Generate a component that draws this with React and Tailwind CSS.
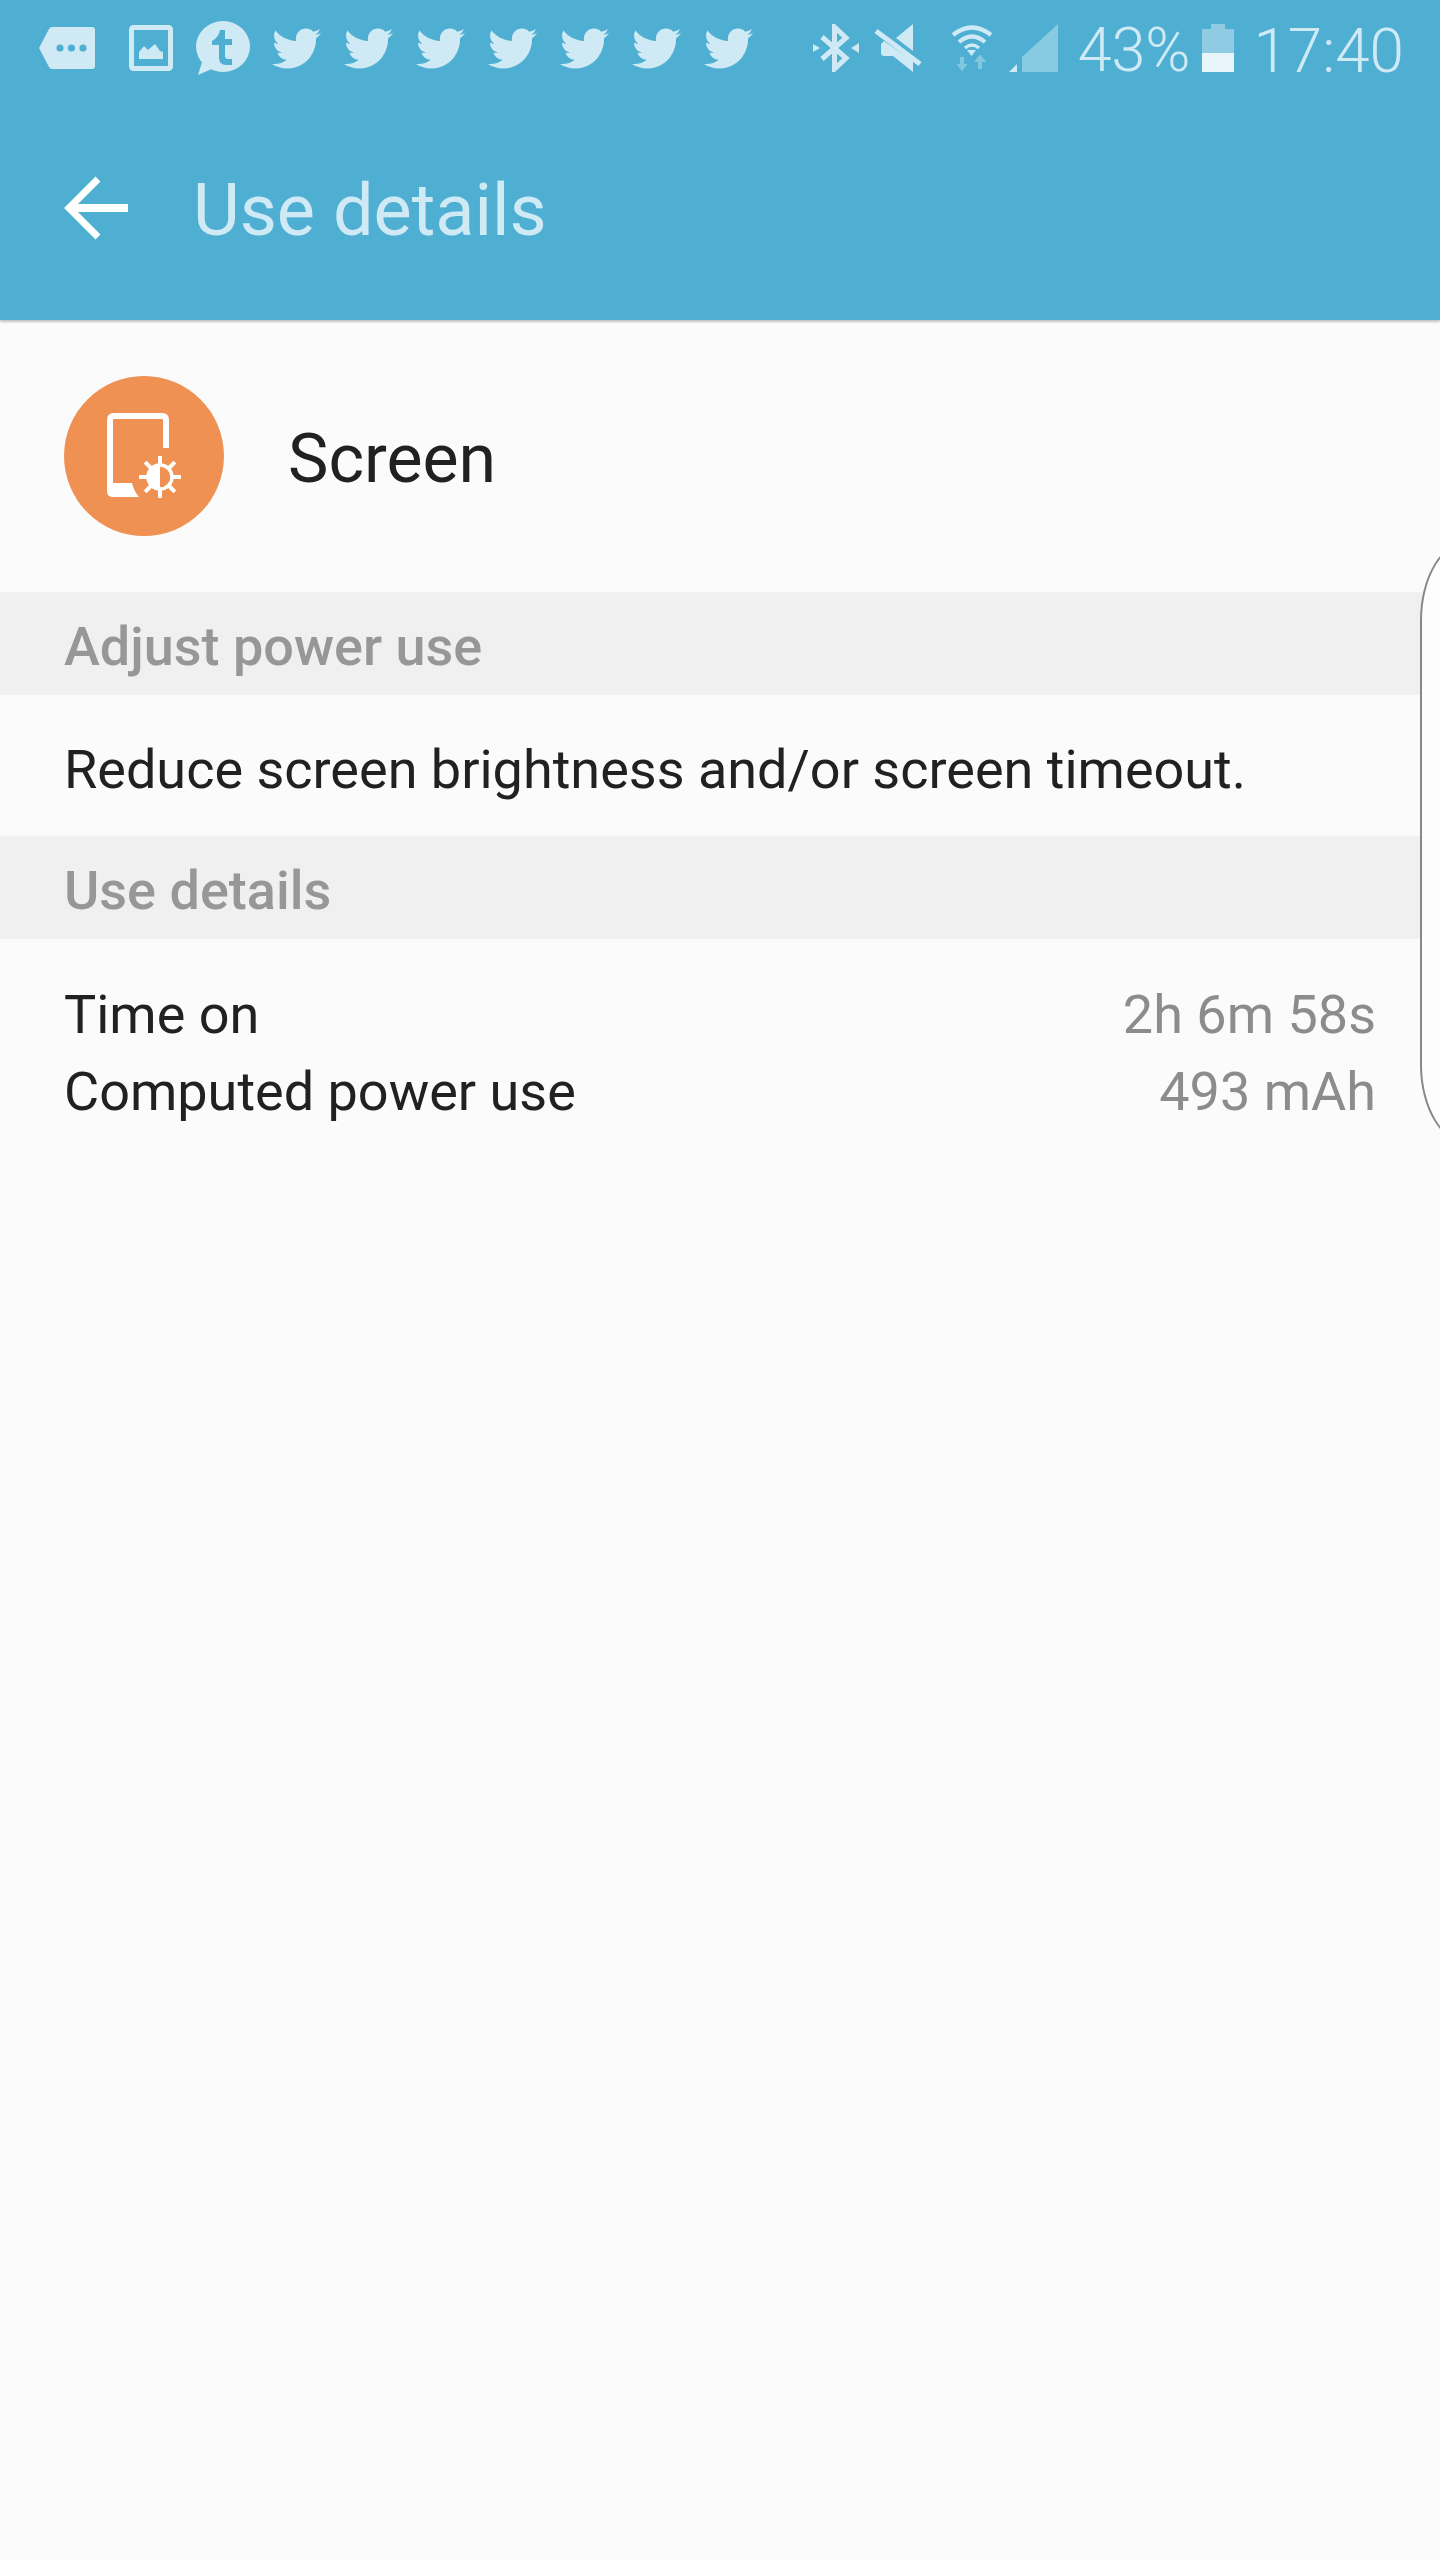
import React from "react";
import { FaTwitter } from "react-icons/fa";

const L = "#cfeaf5";
const BG = "#4fafd3";

function MessageIcon() {
  return (
    <svg width="56" height="42" viewBox="0 0 56 42">
      <path d="M13 0H53Q56 0 56 3V39Q56 42 53 42H13Q11 42 10 40L0 21L10 2Q11 0 13 0Z" fill={L} />
      <circle cx="21" cy="21" r="3.6" fill={BG} />
      <circle cx="32.5" cy="21" r="3.6" fill={BG} />
      <circle cx="44" cy="21" r="3.6" fill={BG} />
    </svg>
  );
}

function ImageIcon() {
  return (
    <svg width="44" height="46" viewBox="0 0 44 46">
      <rect x="2.5" y="2.5" width="39" height="41" rx="2" fill="none" stroke={L} strokeWidth="5" />
      <path d="M10 34V27L15 21L19 25L26 19L31 26L34 27V34Z" fill={L} />
    </svg>
  );
}

function TumblrIcon() {
  return (
    <svg width="54" height="54" viewBox="0 0 54 54">
      <ellipse cx="27" cy="25.5" rx="27" ry="25.5" fill={L} />
      <path d="M2 54L7 38L18 47Z" fill={L} />
      <path d="M24 9Q23 16 16 20V24H23V37Q23 44 30 44H36V38H32Q29 38 29 35V24H36V18H29V9Z" fill={BG} />
    </svg>
  );
}

function BluetoothIcon() {
  return (
    <svg width="46" height="48" viewBox="0 0 46 48">
      <path d="M9 13L33 34L21.5 45V3L33 14L9 35" fill="none" stroke={L} strokeWidth="5" />
      <path d="M0 20L7 24L0 28Z" fill={L} />
      <path d="M46 19L38 24L46 29Z" fill={L} />
    </svg>
  );
}

function MuteIcon() {
  return (
    <svg width="48" height="48" viewBox="0 0 48 48">
      <path d="M22 14L39 0V27Z" fill={L} />
      <path d="M7 20V29Q7 32 10 32H19L39 48V37L10 17Z" fill={L} />
      <path d="M2 7L46 40" stroke={L} strokeWidth="5" fill="none" />
    </svg>
  );
}

function WifiIcon() {
  return (
    <svg width="42" height="48" viewBox="0 0 42 48">
      <path d="M2 11Q21 -4 40 11" fill="none" stroke={L} strokeWidth="4.2" />
      <path d="M8 18Q21 7 34 18" fill="none" stroke={L} strokeWidth="4.2" />
      <path d="M14 24Q21 18 28 24" fill="none" stroke={L} strokeWidth="3.6" />
      <path d="M16 26H25L20.5 32Z" fill={L} />
      <path d="M9 33H13V40H16.5L11 47.5L5.5 40H9Z" fill={L} opacity="0.4" />
      <path d="M27 45H31V38H35.5L29 30.5L23 38H27Z" fill={L} opacity="0.4" />
    </svg>
  );
}

function SignalIcon() {
  return (
    <svg width="49" height="48" viewBox="0 0 49 48">
      <path d="M13 33L49 0V48H13Z" fill={L} opacity="0.45" />
      <path d="M0 48L8 40V48Z" fill={L} />
    </svg>
  );
}

function BatteryIcon() {
  return (
    <svg width="32" height="48" viewBox="0 0 32 48">
      <path d="M9 0H23V5H32V29H0V5H9Z" fill={L} opacity="0.5" />
      <rect x="0" y="29" width="32" height="19" fill="#e8f6fb" />
    </svg>
  );
}

function BackArrow() {
  return (
    <svg width="64" height="64" viewBox="0 0 64 64">
      <path d="M34 3L5 32L34 61" fill="none" stroke="#ffffff" strokeWidth="7" />
      <path d="M6 32H64" fill="none" stroke="#ffffff" strokeWidth="8" />
    </svg>
  );
}

function ScreenIcon() {
  const rays = [0, 45, 90, 135, 180, 225, 270, 315];
  return (
    <svg width="160" height="160" viewBox="0 0 160 160">
      <path d="M102 72V44Q102 40 98 40H50Q46 40 46 44V114" fill="none" stroke="#ffffff" strokeWidth="6" />
      <path d="M43 107H68Q70 115 75 121H49Q43 121 43 115Z" fill="#ffffff" />
      {rays.map((r) => (
        <path key={r} d="M96 90V80" stroke="#ffffff" strokeWidth="4" transform={`rotate(${r} 96 101)`} />
      ))}
      <circle cx="96" cy="101" r="12" fill="#ee9152" stroke="#ffffff" strokeWidth="3.5" />
      <path d="M96 88A13 13 0 0 0 96 114Z" fill="#ffffff" />
    </svg>
  );
}

function SectionHeader({ children }) {
  return (
    <div className="h-[103px] bg-[#f0f0f0] pl-16 pt-[6px] flex items-center text-[54px] font-medium text-[#979797]">
      {children}
    </div>
  );
}

export default function App() {
  return (
    <div
      className="relative w-[1440px] h-[2560px] overflow-hidden bg-[#fbfbfb] text-[#212121]"
      style={{ fontFamily: "Roboto, sans-serif" }}
    >
      <header className="relative h-[320px] bg-[#4fafd3] shadow-[0_2px_2px_rgba(0,0,0,0.22)] flex flex-col">
        <div className="h-[96px] flex items-center text-[#cfeaf5]">
          <div className="ml-[39px]"><MessageIcon /></div>
          <div className="ml-[34px]"><ImageIcon /></div>
          <div className="ml-[23px]"><TumblrIcon /></div>
          <div className="ml-[22px] flex gap-[23px]">
            {[0, 1, 2, 3, 4, 5, 6].map((i) => (
              <FaTwitter key={i} size={49} color={L} />
            ))}
          </div>
          <div className="ml-auto flex items-center">
            <BluetoothIcon />
            <div className="ml-[15px]"><MuteIcon /></div>
            <div className="ml-[29px]"><WifiIcon /></div>
            <div className="ml-[16px]"><SignalIcon /></div>
            <span className="ml-[20px] mt-[5px] text-[61px] font-light leading-none">43%</span>
            <div className="ml-[12px]"><BatteryIcon /></div>
            <span className="ml-[19px] mr-[36px] mt-[5px] text-[62px] font-light leading-none">17:40</span>
          </div>
        </div>
        <div className="flex-1 flex items-center pl-16">
          <BackArrow />
          <h1 className="ml-[65px] mt-[6px] text-[72px] leading-none text-[#cfeaf5]">Use details</h1>
        </div>
      </header>

      <section className="h-[272px] flex items-center pl-16">
        <div className="w-40 h-40 rounded-full bg-[#ee9152]"><ScreenIcon /></div>
        <span className="ml-[64px] mt-[6px] text-[68px] leading-none">Screen</span>
      </section>

      <SectionHeader>Adjust power use</SectionHeader>
      <div className="h-[141px] pl-16 pt-[7px] flex items-center text-[54px]">
        Reduce screen brightness and/or screen timeout.
      </div>
      <SectionHeader>Use details</SectionHeader>

      <div className="pt-[37px] px-16 text-[54px] leading-[77px]">
        <div className="flex justify-between">
          <span>Time on</span>
          <span className="text-[#8c8c8c]">2h 6m 58s</span>
        </div>
        <div className="flex justify-between">
          <span>Computed power use</span>
          <span className="text-[#8c8c8c]">493 mAh</span>
        </div>
      </div>

      <div className="absolute left-[1420px] top-[540px] w-[80px] h-[605px] bg-[#fdfdfd] border-2 border-[#888888] rounded-l-[50px_80px]" />
    </div>
  );
}
